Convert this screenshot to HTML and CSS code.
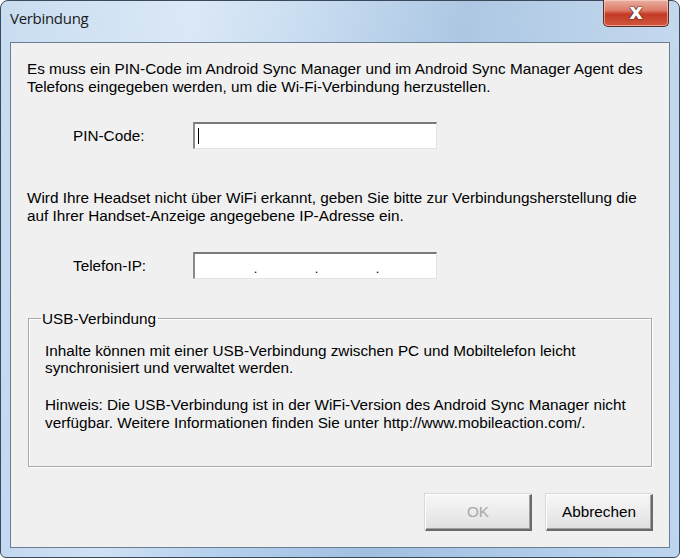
FILE: index.html
```html
<!DOCTYPE html>
<html lang="de">
<head>
<meta charset="utf-8">
<title>Verbindung</title>
<link rel="stylesheet" href="styles.css">
</head>
<body>
<div class="window">
  <div class="titlebar">
    <span class="title">Verbindung</span>
    <div class="close"><span class="x">x</span></div>
  </div>
  <div class="client">
    <p class="para">Es muss ein PIN-Code im Android Sync Manager und im Android Sync Manager Agent des Telefons eingegeben werden, um die Wi-Fi-Verbindung herzustellen.</p>
    <div class="row row-pin">
      <span class="label">PIN-Code:</span>
      <div class="field"><span class="caret"></span></div>
    </div>
    <p class="para para2">Wird Ihre Headset nicht über WiFi erkannt, geben Sie bitte zur Verbindungsherstellung die auf Ihrer Handset-Anzeige angegebene IP-Adresse ein.</p>
    <div class="row row-ip">
      <span class="label">Telefon-IP:</span>
      <div class="field ip"><span>.</span><span>.</span><span>.</span></div>
    </div>
    <fieldset class="group">
      <legend>USB-Verbindung</legend>
      <p class="gtext">Inhalte können mit einer USB-Verbindung zwischen PC und Mobiltelefon leicht synchronisiert und verwaltet werden.</p>
      <p class="gtext gtext2">Hinweis: Die USB-Verbindung ist in der WiFi-Version des Android Sync Manager nicht verfügbar. Weitere Informationen finden Sie unter http://www.mobileaction.com/.</p>
    </fieldset>
    <div class="buttons">
      <div class="btn disabled">OK</div>
      <div class="btn">Abbrechen</div>
    </div>
  </div>
</div>
</body>
</html>
```
FILE: styles.css
```css
html, body {
  margin: 0;
  padding: 0;
  background: #ffffff;
}
body {
  width: 680px;
  height: 560px;
  overflow: hidden;
  font-family: "Liberation Sans", Arial, sans-serif;
}
.window {
  box-sizing: border-box;
  width: 680px;
  height: 558px;
  border: 1px solid #3a4a5c;
  border-radius: 8px 8px 6px 6px;
  background-image:
    linear-gradient(100deg, rgba(255,255,255,0) 0%, rgba(255,255,255,0.35) 25%, rgba(255,255,255,0) 40%, rgba(110,150,195,0.3) 60%, rgba(255,255,255,0.1) 100%),
    linear-gradient(180deg, #c9ddf1 0%, #b6d1ee 100%);
  padding: 0 9px 9px 9px;
  display: flex;
  flex-direction: column;
}
.titlebar {
  height: 41px;
  display: flex;
  align-items: flex-start;
  justify-content: space-between;
}
.title {
  font-family: "Open Sans", "DejaVu Sans", sans-serif;
  font-size: 15px;
  color: #1a1a1a;
  margin-top: 7px;
  margin-left: 0;
  letter-spacing: -0.3px;
}
.close {
  width: 66px;
  height: 27px;
  margin-right: 1px;
  margin-top: -1px;
  box-sizing: border-box;
  border: 1px solid #5e2a22;
  border-top: none;
  border-radius: 0 0 5px 5px;
  background: linear-gradient(180deg, #eab0a2 0%, #dc7a66 40%, #c43a25 55%, #d0573d 100%);
  box-shadow: inset 0 0 0 1px rgba(255,220,210,0.55);
  display: flex;
  align-items: center;
  justify-content: center;
}
.x {
  font-family: "DejaVu Sans", sans-serif;
  font-weight: bold;
  font-size: 21px;
  line-height: 20px;
  color: #ffffff;
  margin-top: -3px;
  text-shadow: 0 0 2px #5e2a22, 0 0 1px #5e2a22, 0 0 1px #5e2a22;
}
.client {
  flex: 1;
  background: #f0f0f0;
  border: 1px solid #6b7d91;
  color: #000;
  font-size: 15.3px;
}
.para {
  margin: 17px 20px 0 16px;
  line-height: 17.5px;
}
.para2 {
  margin-top: 40px;
}
.row {
  display: flex;
  align-items: center;
  height: 27px;
}
.row-pin {
  margin-top: 27px;
}
.row-ip {
  margin-top: 28px;
}
.label {
  width: 182px;
  box-sizing: border-box;
  padding-left: 62px;
}
.field {
  width: 244px;
  height: 27px;
  box-sizing: border-box;
  background: #ffffff;
  border: 1px solid #e3e3e3;
  border-top: 2px solid #7a7a7a;
  border-left: 2px solid #8a8a8a;
  display: flex;
  align-items: center;
}
.caret {
  width: 1px;
  height: 16px;
  background: #000;
  margin-left: 3px;
}
.ip {
  justify-content: space-around;
  padding: 0 28px 0 30px;
}
.ip span {
  font-size: 13px;
  margin-top: 4px;
}
.group {
  margin: 31px 17px 0 17px;
  border: 1px solid #a9a9a9;
  box-shadow: 1px 1px 0 #ffffff, inset 1px 1px 0 #ffffff;
  padding: 14px 16px 0 16px;
  height: 157px;
  box-sizing: border-box;
  min-width: 0;
}
.group legend {
  padding: 0 2px 0 1px;
  margin-left: -4px;
  line-height: 17.5px;
}
.gtext {
  margin: 0;
  line-height: 17.5px;
}
.gtext2 {
  margin-top: 19.5px;
}
.buttons {
  display: flex;
  justify-content: flex-end;
  gap: 14px;
  margin-top: 27px;
  margin-right: 16px;
}
.btn {
  width: 107px;
  height: 37px;
  box-sizing: border-box;
  display: flex;
  align-items: center;
  justify-content: center;
  background: linear-gradient(180deg, #f6f6f6 0%, #ececec 50%, #e0e0e0 100%);
  border: 1px solid #ffffff;
  border-right: 2px solid #6a6a6a;
  border-bottom: 2px solid #6a6a6a;
  box-shadow: inset -1px -1px 0 #a0a0a0, -1px -1px 0 #d8d8d8;
  color: #000;
}
.btn.disabled {
  color: #a8a8a8;
}
```
